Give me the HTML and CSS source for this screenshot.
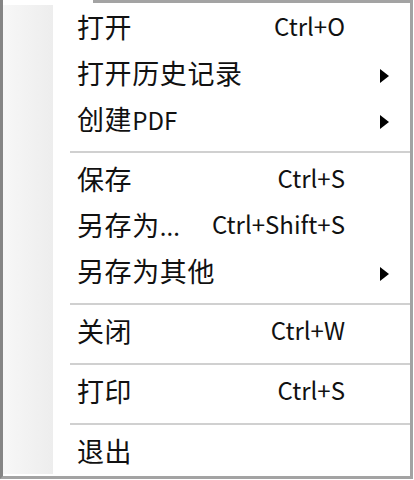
FILE: index.html
```html
<!DOCTYPE html>
<html lang="zh-CN">
<head>
<meta charset="utf-8">
<title>文件菜单</title>
<link rel="stylesheet" href="styles.css">
</head>
<body>
<div class="menu">
  <div class="item"><span class="label">打开</span><span class="key">Ctrl+O</span><span class="sub"></span></div>
  <div class="item"><span class="label">打开历史记录</span><span class="key"></span><span class="sub"><span class="arrow"></span></span></div>
  <div class="item"><span class="label">创建<span class="lat">PDF</span></span><span class="key"></span><span class="sub"><span class="arrow"></span></span></div>
  <div class="sep"><div class="line"></div></div>
  <div class="item"><span class="label">保存</span><span class="key">Ctrl+S</span><span class="sub"></span></div>
  <div class="item"><span class="label">另存为<span class="lat">...</span></span><span class="key">Ctrl+Shift+S</span><span class="sub"></span></div>
  <div class="item"><span class="label">另存为其他</span><span class="key"></span><span class="sub"><span class="arrow"></span></span></div>
  <div class="sep"><div class="line"></div></div>
  <div class="item"><span class="label">关闭</span><span class="key">Ctrl+W</span><span class="sub"></span></div>
  <div class="sep"><div class="line"></div></div>
  <div class="item"><span class="label">打印</span><span class="key">Ctrl+S</span><span class="sub"></span></div>
  <div class="sep"><div class="line"></div></div>
  <div class="item"><span class="label">退出</span><span class="key"></span><span class="sub"></span></div>
</div>
</body>
</html>
```

FILE: styles.css
```css
html, body {
  margin: 0;
  padding: 0;
  background: #ffffff;
}
body {
  width: 414px;
  height: 480px;
  overflow: hidden;
  font-family: "Noto Sans CJK SC", "Noto Sans", sans-serif;
  color: #111111;
}
.menu {
  position: relative;
  box-sizing: border-box;
  width: 413px;
  height: 479px;
  border-left: 3px solid #858585;
  border-right: 3px solid #a3a3a3;
  border-bottom: 3px solid #a3a3a3;
  padding-top: 7px;
  background: #ffffff;
}
.menu::before {
  content: "";
  position: absolute;
  left: 0;
  top: 5px;
  bottom: 2px;
  width: 50px;
  background: linear-gradient(to right, #f7f7f7, #ededed);
}
.menu::after {
  content: "";
  position: absolute;
  left: 90px;
  right: 0;
  top: 0;
  height: 3px;
  background: #a3a3a3;
}
.item {
  position: relative;
  display: grid;
  grid-template-columns: 1fr auto 65px;
  align-items: center;
  height: 46px;
  padding-left: 74px;
  line-height: 1;
}
.label {
  font-size: 27px;
  letter-spacing: 0.6px;
  white-space: nowrap;
  position: relative;
  top: -4px;
}
.lat {
  font-size: 24px;
  letter-spacing: 0;
}
.key {
  text-align: right;
  font-size: 24px;
  white-space: nowrap;
  position: relative;
  top: -4px;
}
.sub {
  display: flex;
  align-items: center;
  padding-left: 35px;
}
.arrow {
  width: 0;
  height: 0;
  border-left: 9px solid #000000;
  border-top: 7px solid transparent;
  border-bottom: 7px solid transparent;
}
.sep {
  position: relative;
  height: 14px;
  box-sizing: border-box;
  padding-top: 6px;
  padding-left: 67px;
}
.line {
  height: 2px;
  background: #d0d0d0;
}
```
